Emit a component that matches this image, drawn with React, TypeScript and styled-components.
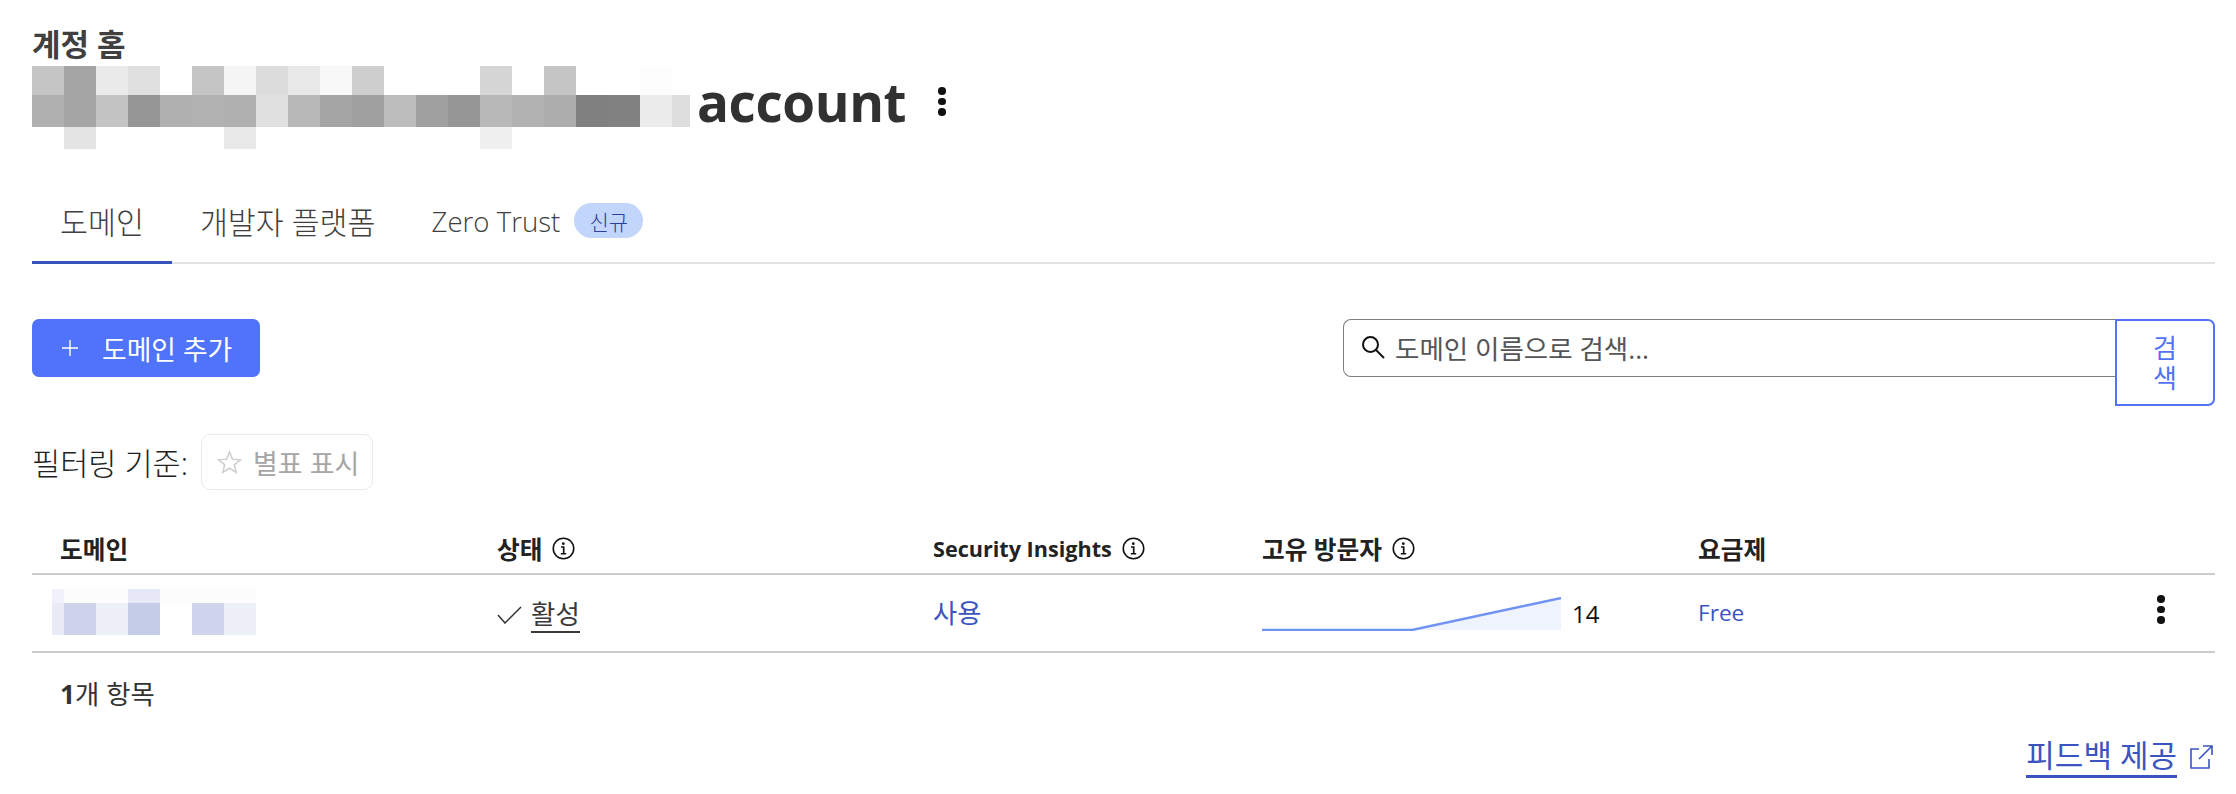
import React from 'react';
import styled, { createGlobalStyle } from 'styled-components';

const GlobalStyle = createGlobalStyle`
  html, body {
    margin: 0;
    padding: 0;
    background: #fff;
  }
  body {
    font-family: 'Open Sans', 'Noto Sans CJK KR', sans-serif;
    color: #313131;
  }
`;

const Page = styled.div`
  width: 2236px;
  height: 794px;
  box-sizing: border-box;
  padding: 0 21px 0 32px;
  overflow: hidden;
`;

const Crumb = styled.div`
  height: 66px;
  box-sizing: border-box;
  padding-top: 25px;
  font-size: 31px;
  line-height: 38px;
  font-weight: 700;
  color: #404040;
`;

const TitleRow = styled.div`
  display: flex;
  align-items: flex-start;
  height: 83px;
`;

const AccountName = styled.h1`
  margin: 6px 0 0 7px;
  font-size: 53px;
  line-height: 60px;
  font-weight: 700;
  letter-spacing: -0.4px;
  color: #313131;
`;

const KebabButton = styled.div<{ $left: number; $top: number }>`
  margin-left: ${(p) => p.$left}px;
  margin-top: ${(p) => p.$top}px;
  width: 8px;
  display: flex;
  flex-direction: column;
  gap: 3px;
  flex: none;
`;

const Dot = styled.span`
  width: 7.5px;
  height: 7.5px;
  border-radius: 50%;
  background: #111;
`;

const TabBar = styled.div`
  display: flex;
  height: 114px;
  margin-top: -1px;
  align-items: flex-end;
  border-bottom: 2px solid #e2e2e2;
`;

const Tab = styled.div<{ $active?: boolean }>`
  display: flex;
  align-items: center;
  gap: 14px;
  height: 72px;
  box-sizing: border-box;
  padding: 0 28px 12px;
  margin-bottom: -2px;
  font-size: 30.4px;
  font-weight: 300;
  color: #404040;
  border-bottom: 3px solid ${(p) => (p.$active ? '#3553b8' : 'transparent')};
`;

const TabLatin = styled.span`
  font-size: 27.6px;
`;

const Badge = styled.span`
  display: inline-flex;
  align-items: center;
  justify-content: center;
  width: 69px;
  height: 35px;
  border-radius: 18px;
  background: #c2d5fb;
  color: #2b3f9c;
  font-size: 21px;
`;

const Toolbar = styled.div`
  display: flex;
  justify-content: space-between;
  align-items: flex-start;
  margin-top: 55px;
  height: 87px;
`;

const AddButton = styled.div`
  display: flex;
  align-items: center;
  gap: 24px;
  width: 228px;
  height: 58px;
  box-sizing: border-box;
  padding-left: 30px;
  border-radius: 7px;
  background: #4f73f9;
  color: #fff;
  font-size: 26.8px;
`;

const SearchGroup = styled.div`
  display: flex;
  align-items: flex-start;
`;

const SearchField = styled.div`
  display: flex;
  align-items: center;
  gap: 10px;
  width: 772px;
  height: 58px;
  box-sizing: border-box;
  padding: 0 0 2px 17px;
  border: 1.5px solid #808080;
  border-right: none;
  border-radius: 8px 0 0 8px;
  font-size: 26.5px;
  color: #555;
`;

const SearchButton = styled.div`
  width: 100px;
  height: 87px;
  box-sizing: border-box;
  padding: 0 30px;
  display: flex;
  align-items: center;
  text-align: center;
  border: 2px solid #5272f7;
  border-radius: 0 7px 7px 0;
  color: #5272f7;
  font-size: 26px;
  line-height: 30px;
`;

const FilterRow = styled.div`
  display: flex;
  align-items: center;
  gap: 13px;
  height: 56px;
  margin-top: 28px;
  font-size: 30.6px;
  font-weight: 300;
  color: #222;
`;

const FilterChip = styled.div`
  display: flex;
  align-items: center;
  gap: 11px;
  width: 172px;
  height: 56px;
  box-sizing: border-box;
  padding-left: 15px;
  border: 1.5px solid #ebebeb;
  border-radius: 9px;
  color: #a6a6a6;
  font-size: 27px;
  font-weight: 400;
`;

const TableGrid = styled.div`
  display: grid;
  grid-template-columns: 437px 436px 329px 436px 1fr auto;
  padding-left: 28px;
  align-items: center;
  border-bottom: 2px solid #cccccc;
`;

const HeadRow = styled(TableGrid)`
  height: 50px;
  padding-top: 5px;
  margin-top: 28px;
  font-size: 24.7px;
  font-weight: 700;
  color: #222;
`;

const BodyRow = styled(TableGrid)`
  height: 76px;
  font-size: 26.3px;
`;

const HeadCell = styled.div`
  display: flex;
  align-items: center;
  gap: 10px;
`;

const HeadLatin = styled.span`
  font-size: 21.6px;
`;

const BodyCell = styled.div<{ $blue?: boolean; $drop?: number }>`
  display: flex;
  align-items: center;
  margin-top: ${(p) => p.$drop ?? 0}px;
  color: ${(p) => (p.$blue ? '#3c54c0' : '#222')};
`;

const StatusLink = styled.span`
  margin-left: 9px;
  font-size: 26.5px;
  color: #3a3a3a;
  border-bottom: 2px solid #3a3a3a;
  line-height: 34px;
`;

const VisitorCount = styled.span`
  margin: -2px 0 0 10px;
  font-size: 24px;
  color: #111;
`;

const PlanName = styled.span`
  font-size: 22.6px;
`;

const RowActions = styled.div`
  padding-right: 50px;
  margin-top: -7px;
`;

const CountLine = styled.div`
  margin: 24px 0 0 28px;
  font-size: 26.4px;
  line-height: 34px;
  color: #333;

  b {
    font-weight: 700;
  }
`;

const FeedbackRow = styled.div`
  display: flex;
  justify-content: flex-end;
  align-items: center;
  gap: 12px;
  margin-top: 24px;
  padding-right: 2px;
  color: #3c54c0;
  font-size: 31px;
`;

const FeedbackLink = styled.span`
  line-height: 40px;
  border-bottom: 3px solid #3c54c0;
`;

const MosaicSvg = styled.svg<{ $shift?: number }>`
  display: block;
  flex: none;
  margin-left: ${(p) => p.$shift ?? 0}px;
`;

const titleTop = ['#c5c5c5', '#a5a5a5', '#eaeaea', '#e0e0e0', '#ffffff', '#c5c5c5', '#f5f5f5', '#dcdcdc', '#e8e8e8', '#f8f8f8', '#cecece', '#ffffff', '#ffffff', '#ffffff', '#d6d6d6', '#ffffff', '#c5c5c5', '#ffffff', '#ffffff', '#fdfdfd'];
const titleMid = ['#b0b0b0', '#a5a5a5', '#c4c4c4', '#969696', '#b0b0b0', '#b2b2b2', '#b0b0b0', '#e0e0e0', '#b8b8b8', '#a5a5a5', '#a0a0a0', '#bcbcbc', '#a0a0a0', '#969696', '#b8b8b8', '#b2b2b2', '#adadad', '#808080', '#828282', '#ececec'];

const TitleMosaic = () => (
  <MosaicSvg width="658" height="83" viewBox="0 0 658 83">
    {titleTop.map((c, i) => (
      <rect key={i} x={i * 32} y="0" width="32" height="29" fill={c} />
    ))}
    {titleMid.map((c, i) => (
      <rect key={i} x={i * 32} y="29" width="32" height="32" fill={c} />
    ))}
    <rect x="640" y="29" width="18" height="32" fill="#dedede" />
    <rect x="32" y="61" width="32" height="22" fill="#e4e4e4" />
    <rect x="192" y="61" width="32" height="22" fill="#e8e8e8" />
    <rect x="448" y="61" width="32" height="22" fill="#f0f0f0" />
  </MosaicSvg>
);

const DomainMosaic = () => (
  <MosaicSvg $shift={-8} width="204" height="46" viewBox="0 0 204 46">
    <rect width="204" height="14" fill="#fcfcfd" />
    <rect width="12" height="14" fill="#f0f1fa" />
    <rect x="76" width="32" height="14" fill="#e6e8f5" />
    <rect y="14" width="12" height="32" fill="#e8eaf6" />
    <rect x="12" y="14" width="32" height="32" fill="#ced3ec" />
    <rect x="44" y="14" width="32" height="32" fill="#eef0f8" />
    <rect x="76" y="14" width="32" height="32" fill="#c5cce8" />
    <rect x="108" y="14" width="32" height="32" fill="#ffffff" />
    <rect x="140" y="14" width="32" height="32" fill="#d0d5ee" />
    <rect x="172" y="14" width="32" height="32" fill="#eef0f8" />
  </MosaicSvg>
);

const InfoIcon = () => (
  <svg width="23" height="23" viewBox="0 0 22 22" fill="none" stroke="#111">
    <circle cx="11" cy="11" r="9.8" strokeWidth="1.5" />
    <circle cx="10.8" cy="6.4" r="1.3" fill="#111" stroke="none" />
    <path d="M8.6 9.6h2.6v6.4M8.4 16h5.2" strokeWidth="1.6" />
  </svg>
);

const Sparkline = () => (
  <svg width="300" height="34" viewBox="0 0 300 34">
    <path d="M150 33 L299 1 V33Z" fill="#eff3fe" />
    <path d="M0 33 H150 L299 1" fill="none" stroke="#6f92f5" strokeWidth="2.4" />
  </svg>
);

const Kebab = ({ left, top }: { left: number; top: number }) => (
  <KebabButton $left={left} $top={top}>
    <Dot />
    <Dot />
    <Dot />
  </KebabButton>
);

export default function App() {
  return (
    <>
      <GlobalStyle />
      <Page>
        <Crumb>계정 홈</Crumb>
        <TitleRow>
          <TitleMosaic />
          <AccountName>account</AccountName>
          <Kebab left={32} top={21} />
        </TitleRow>
        <TabBar>
          <Tab $active>도메인</Tab>
          <Tab>개발자 플랫폼</Tab>
          <Tab>
            <TabLatin>Zero Trust</TabLatin>
            <Badge>신규</Badge>
          </Tab>
        </TabBar>
        <Toolbar>
          <AddButton>
            <svg width="16" height="16" viewBox="0 0 16 16" stroke="#fff" strokeWidth="1.4">
              <path d="M8 0v16M0 8h16" />
            </svg>
            도메인 추가
          </AddButton>
          <SearchGroup>
            <SearchField>
              <svg width="24" height="24" viewBox="0 0 24 24" fill="none" stroke="#111" strokeWidth="2">
                <circle cx="9.5" cy="9.5" r="7.5" />
                <path d="M15 15l8 8" />
              </svg>
              도메인 이름으로 검색...
            </SearchField>
            <SearchButton>검색</SearchButton>
          </SearchGroup>
        </Toolbar>
        <FilterRow>
          필터링 기준:
          <FilterChip>
            <svg width="25" height="24" viewBox="0 0 25 24" fill="none" stroke="#cfcfcf" strokeWidth="1.6">
              <path d="M12.5 2l3 7.2 7.8.6-6 5 1.9 7.6-6.7-4.1-6.7 4.1 1.9-7.6-6-5 7.8-.6z" />
            </svg>
            별표 표시
          </FilterChip>
        </FilterRow>
        <HeadRow>
          <HeadCell>도메인</HeadCell>
          <HeadCell>
            상태 <InfoIcon />
          </HeadCell>
          <HeadCell>
            <HeadLatin>Security Insights</HeadLatin> <InfoIcon />
          </HeadCell>
          <HeadCell>
            고유 방문자 <InfoIcon />
          </HeadCell>
          <HeadCell>요금제</HeadCell>
        </HeadRow>
        <BodyRow>
          <BodyCell $drop={-2}>
            <DomainMosaic />
          </BodyCell>
          <BodyCell $drop={4}>
            <svg width="25" height="18" viewBox="0 0 25 18" fill="none" stroke="#333" strokeWidth="1.5">
              <path d="M1 9l7 8L24 1" />
            </svg>
            <StatusLink>활성</StatusLink>
          </BodyCell>
          <BodyCell $blue $drop={-3}>사용</BodyCell>
          <BodyCell $drop={2}>
            <Sparkline />
            <VisitorCount>14</VisitorCount>
          </BodyCell>
          <BodyCell $blue $drop={-2}>
            <PlanName>Free</PlanName>
          </BodyCell>
          <RowActions>
            <Kebab left={0} top={0} />
          </RowActions>
        </BodyRow>
        <CountLine>
          <b>1</b>개 항목
        </CountLine>
        <FeedbackRow>
          <FeedbackLink>피드백 제공</FeedbackLink>
          <svg width="24" height="24" viewBox="0 0 24 24" fill="none" stroke="#3c54c0" strokeWidth="1.6">
            <path d="M10 4H2v19h18v-9M14 1h9v9M23 1L10 14" />
          </svg>
        </FeedbackRow>
      </Page>
    </>
  );
}
